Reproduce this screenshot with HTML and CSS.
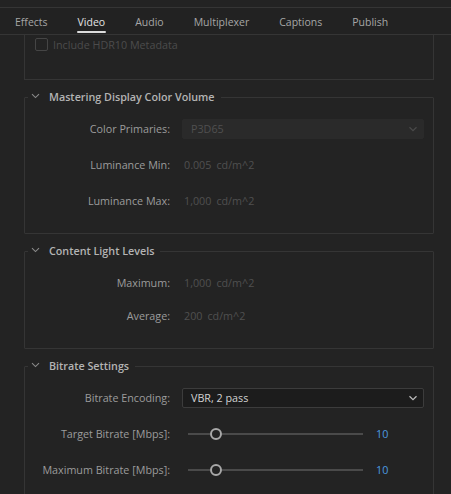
FILE: index.html
```html
<!DOCTYPE html>
<html>
<head>
<meta charset="utf-8">
<link rel="stylesheet" href="styles.css">
</head>
<body>
<div class="page">
  <div class="tabbar">
    <div class="tab">Effects</div>
    <div class="tab active">Video</div>
    <div class="tab">Audio</div>
    <div class="tab">Multiplexer</div>
    <div class="tab">Captions</div>
    <div class="tab">Publish</div>
  </div>
  <div class="content">
    <div class="box partial">
      <label class="check"><span class="checkbox"></span><span>Include HDR10 Metadata</span></label>
    </div>

    <fieldset class="group g-master">
      <legend><svg class="chev" width="9" height="6" viewBox="0 0 9 6"><path d="M1 1.2 L4.5 4.6 L8 1.2" fill="none" stroke="#8a8a8a" stroke-width="1.1"/></svg>Mastering Display Color Volume</legend>
      <div class="grid">
        <div class="label">Color Primaries:</div>
        <div class="select disabled"><span>P3D65</span><svg width="10" height="6" viewBox="0 0 10 6"><path d="M1.5 1.2 L5 4.6 L8.5 1.2" fill="none" stroke="#4a4a4a" stroke-width="1.2"/></svg></div>
        <div class="label">Luminance Min:</div>
        <div class="value"><span class="num">0.005</span><span class="unit">cd/m^2</span></div>
        <div class="label">Luminance Max:</div>
        <div class="value"><span class="num">1,000</span><span class="unit">cd/m^2</span></div>
      </div>
    </fieldset>

    <fieldset class="group g-light">
      <legend><svg class="chev" width="9" height="6" viewBox="0 0 9 6"><path d="M1 1.2 L4.5 4.6 L8 1.2" fill="none" stroke="#8a8a8a" stroke-width="1.1"/></svg>Content Light Levels</legend>
      <div class="grid">
        <div class="label">Maximum:</div>
        <div class="value"><span class="num">1,000</span><span class="unit">cd/m^2</span></div>
        <div class="label">Average:</div>
        <div class="value"><span class="num">200</span><span class="unit">cd/m^2</span></div>
      </div>
    </fieldset>

    <fieldset class="group g-bitrate">
      <legend><svg class="chev" width="9" height="6" viewBox="0 0 9 6"><path d="M1 1.2 L4.5 4.6 L8 1.2" fill="none" stroke="#8a8a8a" stroke-width="1.1"/></svg>Bitrate Settings</legend>
      <div class="grid">
        <div class="label">Bitrate Encoding:</div>
        <div class="select"><span>VBR, 2 pass</span><svg width="10" height="6" viewBox="0 0 10 6"><path d="M1.5 1.2 L5 4.6 L8.5 1.2" fill="none" stroke="#bdbdbd" stroke-width="1.2"/></svg></div>
        <div class="label">Target Bitrate [Mbps]:</div>
        <div class="slider-row"><div class="slider"><div class="track"></div><div class="thumb"></div><div class="track rest"></div></div><span class="sval">10</span></div>
        <div class="label">Maximum Bitrate [Mbps]:</div>
        <div class="slider-row"><div class="slider"><div class="track"></div><div class="thumb"></div><div class="track rest"></div></div><span class="sval">10</span></div>
      </div>
    </fieldset>
  </div>
</div>
</body>
</html>
```
FILE: styles.css
```css
html, body {
  margin: 0;
  padding: 0;
  background: #232323;
}
body {
  font-family: "Open Sans", "Noto Sans", sans-serif;
  font-size: 10.75px;
  color: #9c9c9c;
  width: 451px;
  height: 494px;
  overflow: hidden;
}
.page {
  padding-top: 7px;
}
.tabbar {
  display: flex;
  height: 26px;
  border-top: 1px solid #353535;
  border-bottom: 1px solid #353535;
  background: #222222;
  position: relative;
  z-index: 2;
}
.tab {
  padding: 1px 15px 0 15px;
  line-height: 26px;
  font-size: 10.5px;
  color: #a6a6a6;
  position: relative;
}
.tab.active {
  color: #e3e3e3;
}
.tab.active::after {
  content: "";
  position: absolute;
  left: 14px;
  right: 14px;
  bottom: 1px;
  height: 2px;
  border-radius: 1px;
  background: #dcdcdc;
}
.content {
  padding-left: 24px;
  width: 410px;
}
.box.partial {
  border: 1px solid #353535;
  border-top: none;
  height: 45px;
  padding: 2px 0 0 10px;
  box-sizing: border-box;
}
.check {
  display: flex;
  align-items: center;
  gap: 5px;
  color: #4c4c4c;
  height: 15px;
}
.checkbox {
  width: 11px;
  height: 11px;
  border: 1.5px solid #454545;
  border-radius: 2px;
}
.group {
  margin: 10px 0 0 0;
  padding: 0 9px 22px 0;
  border: 1px solid #353535;
  border-radius: 1px;
  min-width: 0;
}
.group legend {
  margin-left: 3px;
  padding: 0 6px 0 3px;
  line-height: 16px;
  font-weight: 600;
  color: #b4b4b4;
  display: flex;
  align-items: center;
}
.chev {
  margin-right: 9px;
  margin-top: -3px;
}
.grid {
  display: grid;
  grid-template-columns: 145px 1fr;
  column-gap: 12px;
  row-gap: 16px;
  padding-top: 14px;
}
.g-light .grid {
  row-gap: 13px;
}
.g-master {
  margin-top: 9px;
}
.g-light {
  margin-top: 9px;
}
.g-bitrate {
  margin-top: 9px;
}
.label {
  text-align: right;
  height: 20px;
  line-height: 20px;
  color: #9c9c9c;
  white-space: nowrap;
}
.select {
  height: 20px;
  box-sizing: border-box;
  border: 1px solid #3c3c3c;
  background: #1c1c1c;
  border-radius: 2px;
  display: flex;
  align-items: center;
  justify-content: space-between;
  padding: 0 5px 0 8px;
  color: #d2d2d2;
}
.select.disabled {
  border-color: #2a2a2a;
  background: #2a2a2a;
  color: #505050;
}
.value {
  height: 20px;
  line-height: 20px;
  padding-left: 2px;
  display: flex;
  gap: 5px;
  color: #505050;
}
.slider-row {
  height: 20px;
  display: flex;
  align-items: center;
  padding-left: 6px;
}
.slider {
  width: 175px;
  display: flex;
  align-items: center;
}
.track {
  height: 2px;
  width: 22px;
  background: #4a4a4a;
}
.track.rest {
  flex: 1;
}
.thumb {
  width: 8px;
  height: 8px;
  border: 2px solid #a8a8a8;
  border-radius: 50%;
  background: #232323;
}
.sval {
  margin-left: 13px;
  color: #4b9ae0;
}
```
